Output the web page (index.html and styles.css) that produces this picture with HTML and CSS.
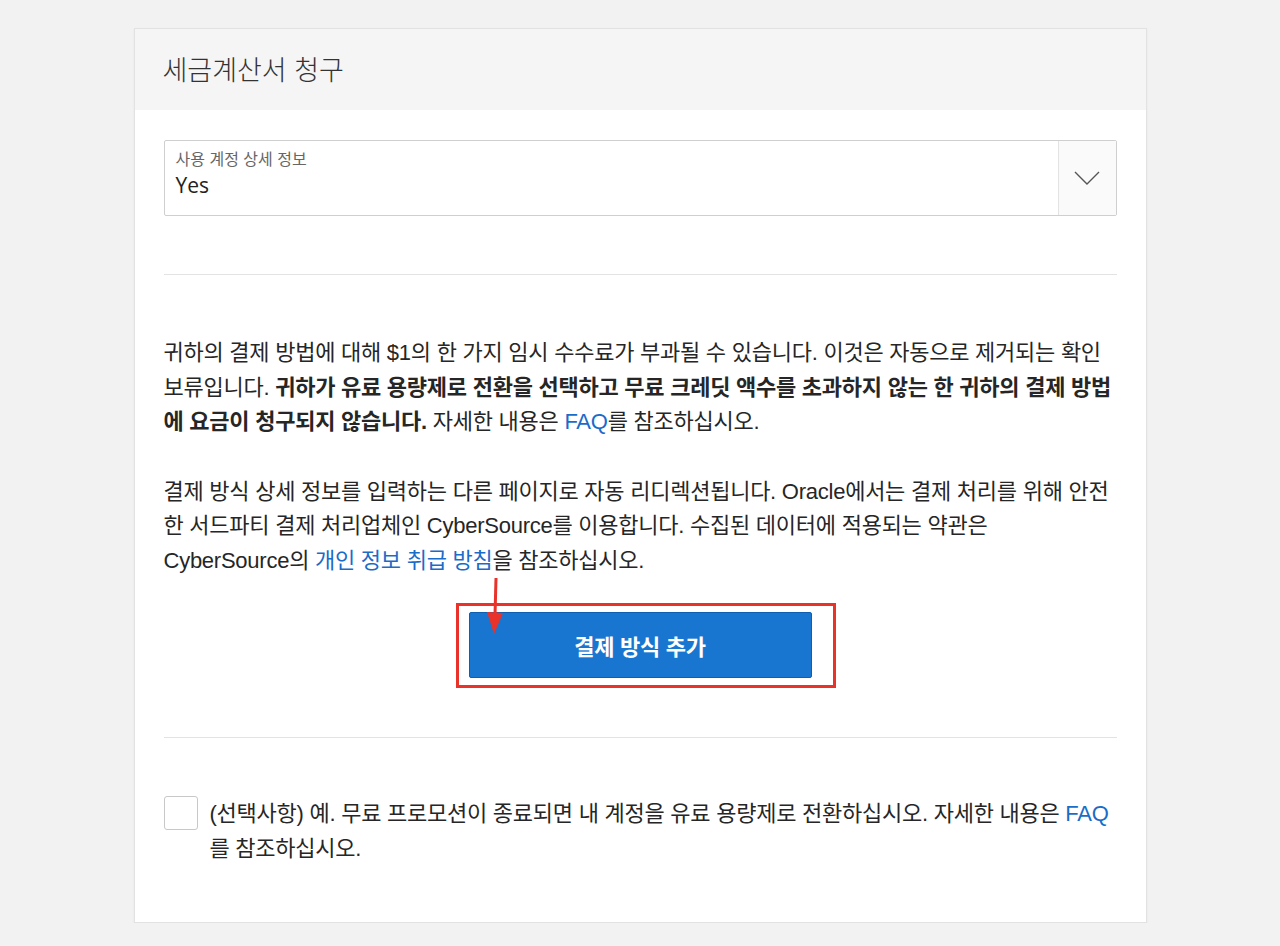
FILE: index.html
```html
<!DOCTYPE html>
<html lang="ko">
<head>
<meta charset="utf-8">
<link rel="stylesheet" href="styles.css">
</head>
<body>
<div class="card">
  <div class="card-head"><h1 class="title">세금계산서 청구</h1></div>
  <div class="card-body">
    <div class="select">
      <div class="select-main">
        <div class="select-label">사용 계정 상세 정보</div>
        <div class="select-value">Yes</div>
      </div>
      <div class="select-arrow">
        <svg width="26" height="14" viewBox="0 0 26 14"><path d="M1 1 L13 13 L25 1" fill="none" stroke="#555" stroke-width="1.4"/></svg>
      </div>
    </div>
    <hr class="divider first">
    <p class="para">귀하의 결제 방법에 대해 $1의 한 가지 임시 수수료가 부과될 수 있습니다. 이것은 자동으로 제거되는 확인 보류입니다. <b>귀하가 유료 용량제로 전환을 선택하고 무료 크레딧 액수를 초과하지 않는 한 귀하의 결제 방법에 요금이 청구되지 않습니다.</b> 자세한 내용은 <a class="link">FAQ</a>를 참조하십시오.</p>
    <p class="para">결제 방식 상세 정보를 입력하는 다른 페이지로 자동 리디렉션됩니다. Oracle에서는 결제 처리를 위해 안전한 서드파티 결제 처리업체인 CyberSource를 이용합니다. 수집된 데이터에 적용되는 약관은 CyberSource의 <a class="link">개인 정보 취급 방침</a>을 참조하십시오.</p>
    <div class="btn-row">
      <div class="highlight">
        <button class="btn">결제 방식 추가</button>
        <svg class="arrow" width="20" height="56" viewBox="0 0 20 56"><path d="M11 0 L10 38" stroke="#e8322a" stroke-width="3" fill="none"/><path d="M2 34 L18 35 L9 56 Z" fill="#e8322a"/></svg>
      </div>
    </div>
    <hr class="divider second">
    <label class="check">
      <span class="box"></span>
      <span class="check-text">(선택사항) 예. 무료 프로모션이 종료되면 내 계정을 유료 용량제로 전환하십시오. 자세한 내용은 <a class="link">FAQ</a>를 참조하십시오.</span>
    </label>
  </div>
</div>
</body>
</html>
```
FILE: styles.css
```css
* { box-sizing: border-box; }
html, body { margin: 0; padding: 0; }
body {
  background: #f2f2f2;
  font-family: "Liberation Sans", "Noto Sans CJK KR", sans-serif;
  color: #2b2b2b;
  padding-top: 28px;
}
.card {
  width: 1013px;
  margin: 0 auto;
  background: #fff;
  border: 1px solid #e2e2e2;
  box-shadow: 0 1px 2px rgba(0,0,0,0.06);
  height: 895px;
}
.card-head {
  background: #f5f5f5;
  height: 81px;
  display: flex;
  align-items: center;
  padding: 0 28px;
}
.title {
  margin: 0;
  font-family: "Noto Sans CJK KR", sans-serif;
  font-weight: 300;
  font-size: 27px;
  color: #333;
  padding-bottom: 2px;
}
.card-body { padding: 30px 29px 0; }
.select {
  display: flex;
  height: 76px;
  border: 1px solid #cfcfcf;
  border-radius: 2px;
}
.select-main { flex: 1; padding: 7px 11px 0; }
.select-label {
  font-family: "Noto Sans CJK KR", sans-serif;
  font-size: 16px;
  color: #666;
  line-height: 20px;
}
.select-value {
  font-family: "Open Sans", sans-serif;
  font-size: 21px;
  color: #222;
  line-height: 30px;
  margin-top: 2px;
}
.select-arrow {
  width: 58px;
  background: #fafafa;
  border-left: 1px solid #e3e3e3;
  display: flex;
  align-items: center;
  justify-content: center;
}
.divider {
  border: 0;
  border-top: 1px solid #e3e3e3;
  margin: 0;
}
.divider.first { margin-top: 58px; }
.para {
  margin: 0;
  font-size: 22px;
  line-height: 34.5px;
  letter-spacing: -0.25px;
  color: #262626;
}
.divider.first + .para { margin-top: 61px; }
.para + .para { margin-top: 35px; }
.para b { font-weight: 700; }
.link { color: #1a6cc9; text-decoration: none; }
.btn-row { display: flex; justify-content: center; margin-top: 25px; padding-left: 11px; }
.highlight {
  position: relative;
  border: 3px solid #e8322a;
  padding: 6px 21px 7px 10px;
}
.btn {
  display: block;
  width: 343px;
  height: 66px;
  background: #1976d0;
  border: 1px solid #0f5fb0;
  border-radius: 2px;
  color: #fff;
  font-family: "Noto Sans CJK KR", sans-serif;
  font-weight: 700;
  font-size: 22px;
  letter-spacing: -0.3px;
}
.arrow { position: absolute; left: 26px; top: -28px; }
.divider.second { margin-top: 49px; }
.check {
  display: flex;
  align-items: flex-start;
  margin-top: 58px;
  gap: 12px;
}
.box {
  flex: none;
  width: 34px;
  height: 34px;
  border: 1px solid #c8c8c8;
  border-radius: 3px;
  background: #fff;
}
.check-text {
  font-size: 22px;
  line-height: 35px;
  letter-spacing: -0.25px;
  color: #262626;
  margin-top: 0;
}
```
